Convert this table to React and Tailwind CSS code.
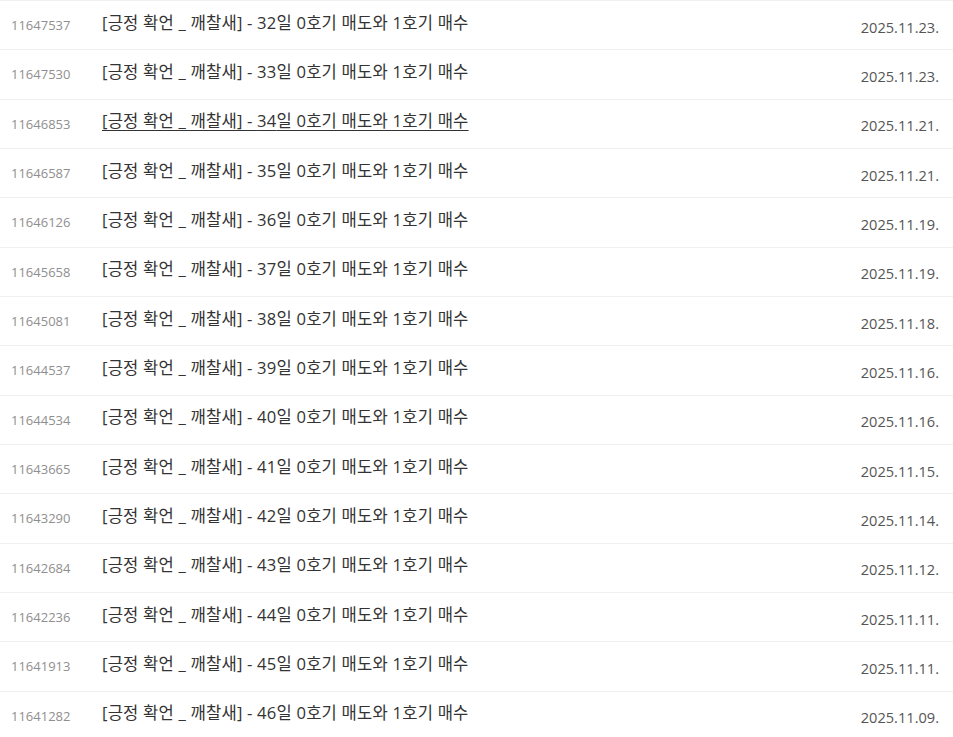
import React from 'react';

const posts = [
  { id: '11647537', day: 32, date: '2025.11.23.' },
  { id: '11647530', day: 33, date: '2025.11.23.' },
  { id: '11646853', day: 34, date: '2025.11.21.', hover: true },
  { id: '11646587', day: 35, date: '2025.11.21.' },
  { id: '11646126', day: 36, date: '2025.11.19.' },
  { id: '11645658', day: 37, date: '2025.11.19.' },
  { id: '11645081', day: 38, date: '2025.11.18.' },
  { id: '11644537', day: 39, date: '2025.11.16.' },
  { id: '11644534', day: 40, date: '2025.11.16.' },
  { id: '11643665', day: 41, date: '2025.11.15.' },
  { id: '11643290', day: 42, date: '2025.11.14.' },
  { id: '11642684', day: 43, date: '2025.11.12.' },
  { id: '11642236', day: 44, date: '2025.11.11.' },
  { id: '11641913', day: 45, date: '2025.11.11.' },
  { id: '11641282', day: 46, date: '2025.11.09.' },
];

const App = () => {
  return (
    <div className="w-[953px] h-[737px] overflow-hidden bg-white font-['Open_Sans','Noto_Sans_CJK_KR',sans-serif]">
      {posts.map((p) => (
        <div key={p.id} className="flex items-center h-[49.33px] border-t border-[#f0f0f0] pl-[11px] pr-[14px]">
          <span className="w-[91px] shrink-0 text-[13px] text-[#8f8f8f] pt-[1px]">{p.id}</span>
          <a
            href="#"
            className={`flex-1 text-[16.6px] tracking-[0.2px] text-[#333] pb-[4px] ${p.hover ? 'underline underline-offset-[3px]' : ''}`}
          >
            [긍정 확언 _ 깨찰새] - {p.day}일 0호기 매도와 1호기 매수
          </a>
          <span className="shrink-0 text-[14.6px] text-[#555] pt-[5px]">{p.date}</span>
        </div>
      ))}
    </div>
  );
};

export default App;
